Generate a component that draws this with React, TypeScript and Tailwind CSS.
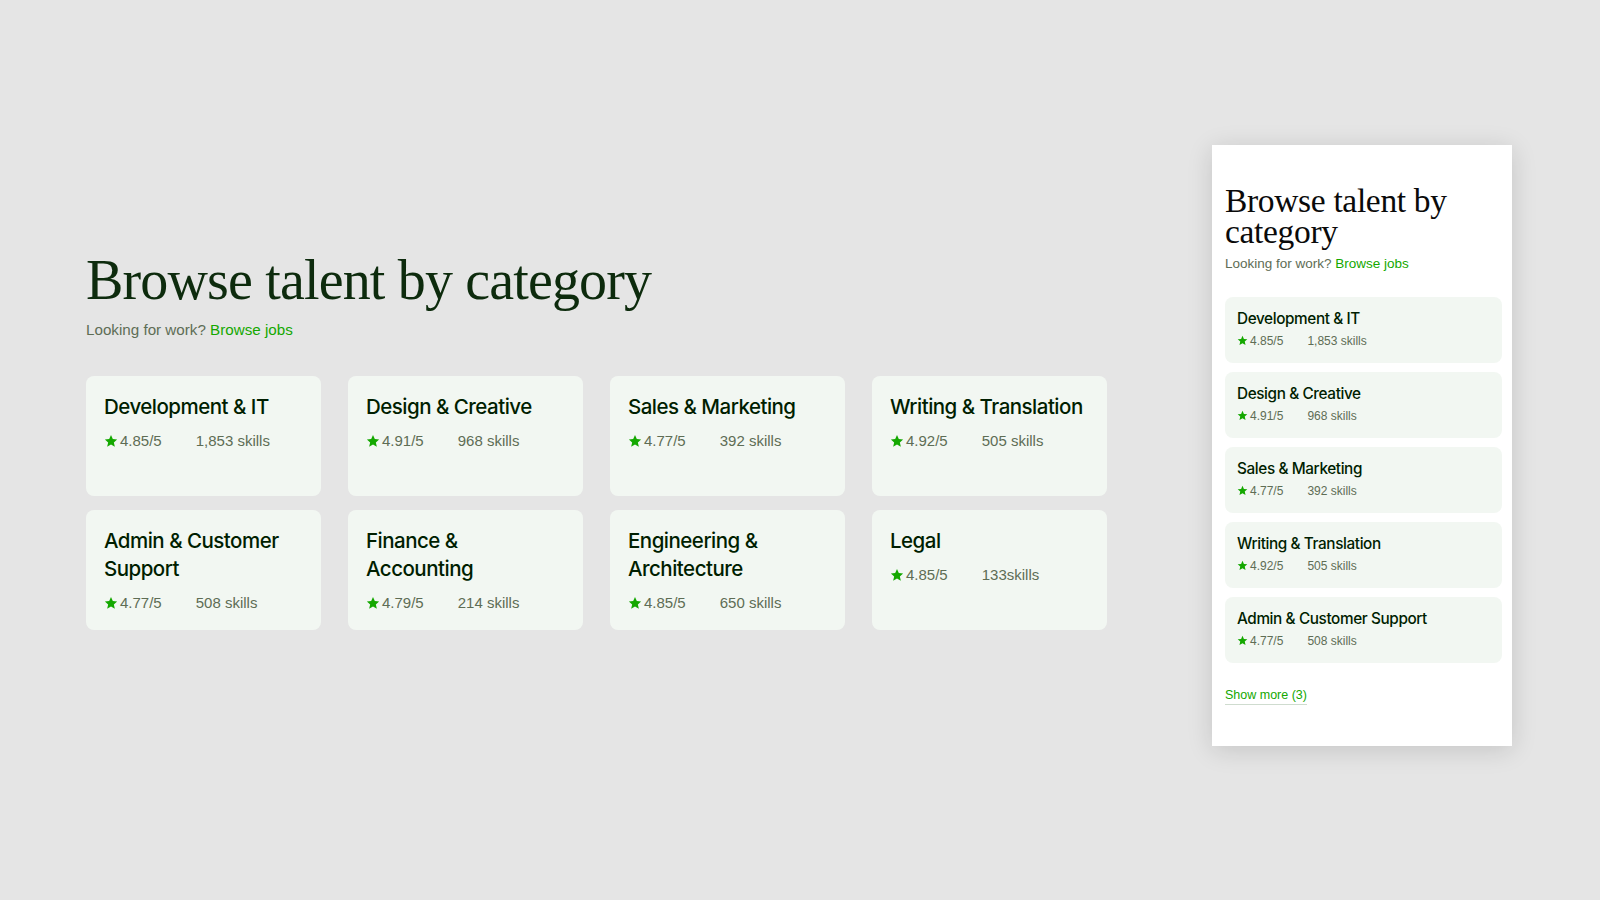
const categories = [
  { name: "Development & IT", rating: "4.85/5", skills: "1,853 skills" },
  { name: "Design & Creative", rating: "4.91/5", skills: "968 skills" },
  { name: "Sales & Marketing", rating: "4.77/5", skills: "392 skills" },
  { name: "Writing & Translation", rating: "4.92/5", skills: "505 skills" },
  { name: "Admin & Customer Support", rating: "4.77/5", skills: "508 skills" },
  { name: "Finance & Accounting", rating: "4.79/5", skills: "214 skills" },
  { name: "Engineering & Architecture", rating: "4.85/5", skills: "650 skills" },
  { name: "Legal", rating: "4.85/5", skills: "133skills" },
]

const sans = "font-['Liberation_Sans',Arial,sans-serif]"
const heading = "font-['Inter','Liberation_Sans',Arial,sans-serif]"
const serif = "font-['Liberation_Serif','Times_New_Roman',serif]"

function Star({ className }: { className?: string }) {
  return (
    <svg viewBox="0 0 24 24" className={className} fill="currentColor" aria-hidden>
      <path d="M12 1.8l3.1 6.9 7.4.7-5.6 5 1.7 7.4L12 17.9l-6.6 3.9 1.7-7.4-5.6-5 7.4-.7z" />
    </svg>
  )
}

function CategoryCard({ name, rating, skills }: { name: string; rating: string; skills: string }) {
  return (
    <div className="h-[120px] rounded-lg bg-[#f2f7f2] pl-[18px] pr-[20px] pt-[17px]">
      <h3 className={`text-[20.5px] font-medium leading-[28px] tracking-[-0.025em] text-[#001e00] ${heading}`}>
        {name}
      </h3>
      <div className="mt-[9px] flex items-center text-[15px] leading-[22px] text-[#5e6d55]">
        <Star className="mr-[2px] h-[14px] w-[14px] text-[#14a800]" />
        <span>{rating}</span>
        <span className="ml-[34px]">{skills}</span>
      </div>
    </div>
  )
}

function MobileCard({ name, rating, skills }: { name: string; rating: string; skills: string }) {
  return (
    <div className="h-[66px] rounded-lg bg-[#f2f7f2] px-3 pt-3">
      <h3 className={`text-[15.3px] font-medium leading-[20px] tracking-[-0.025em] text-[#001e00] ${heading}`}>
        {name}
      </h3>
      <div className="mt-[3px] flex items-center text-[12px] leading-[18px] text-[#5e6d55]">
        <Star className="mr-[2px] h-[11px] w-[11px] text-[#14a800]" />
        <span>{rating}</span>
        <span className="ml-6">{skills}</span>
      </div>
    </div>
  )
}

export default function App() {
  return (
    <div className={`flex h-[900px] w-full items-center justify-between bg-[#e5e5e5] pb-[10px] pl-[86px] pr-[88px] ${sans}`}>
      <section className="w-[1021px] pb-[12px]">
        <h1 className={`text-[56px] leading-[62px] tracking-[-0.015em] text-[#0d2b0d] ${serif}`}>
          Browse talent by category
        </h1>
        <p className="mt-2 text-[15.2px] leading-[22px] text-[#5e6d55]">
          Looking for work? <a href="#jobs" className="text-[#14a800]">Browse jobs</a>
        </p>
        <div className="mt-[35px] grid grid-cols-4 gap-x-[27px] gap-y-[14px]">
          {categories.map((c) => (
            <CategoryCard key={c.name} {...c} />
          ))}
        </div>
      </section>

      <aside className="h-[601px] w-[300px] bg-white pl-[13px] pr-[10px] pt-[40px] shadow-[0_4px_24px_rgba(0,0,0,0.14)]">
        <h2 className={`text-[33.5px] leading-[31px] tracking-[-0.01em] text-[#0a0a0a] ${serif}`}>
          Browse talent by category
        </h2>
        <p className="mt-[7px] text-[13.5px] leading-[20px] text-[#5e6d55]">
          Looking for work? <a href="#jobs" className="text-[#14a800]">Browse jobs</a>
        </p>
        <div className="mt-[23px] flex flex-col gap-[9px]">
          {categories.slice(0, 5).map((c) => (
            <MobileCard key={c.name} {...c} />
          ))}
        </div>
        <a
          href="#more"
          className="mt-[24px] inline-block border-b border-[#cfdccf] text-[12.5px] leading-[17px] text-[#14a800]"
        >
          Show more (3)
        </a>
      </aside>
    </div>
  )
}
